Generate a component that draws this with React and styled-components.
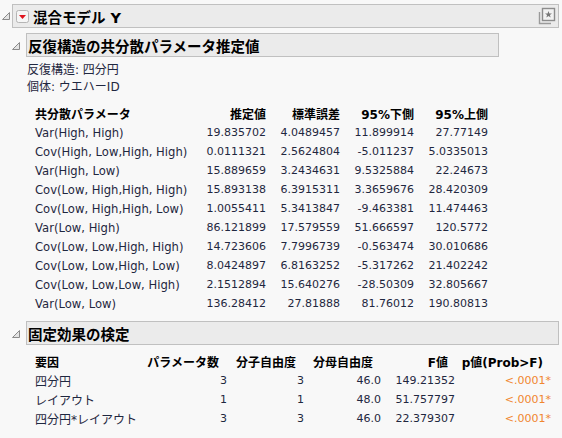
import styled, { createGlobalStyle } from 'styled-components'

const GlobalStyle = createGlobalStyle`
  body {
    margin: 0;
    background: #f8f8f8;
    font-family: "DejaVu Sans", "Noto Sans CJK JP", sans-serif;
    font-size: 11px;
    color: #1f2740;
  }
`

const Page = styled.div`
  padding: 4px 3px 0 2px;
`

const Outline = styled.div`
  display: grid;
  grid-template-columns: ${p => p.$indent}px 1fr;
  align-items: start;
`

const Toggle = styled.svg`
  width: 8px;
  height: 8px;
  margin-top: ${p => p.$top}px;
`

const Header = styled.div`
  display: flex;
  align-items: center;
  gap: 4px;
  height: 22px;
  width: ${p => (p.$width ? `${p.$width}px` : 'auto')};
  padding: 0 2px 0 ${p => p.$pad}px;
  background: #ebebeb;
  border: 1px solid #c0c0c0;
  font-size: 14.5px;
  font-weight: 700;
  color: #000;
`

const Title = styled.span`
  flex: 1;
  white-space: nowrap;
`

const Body = styled.div`
  padding-top: ${p => p.$top}px;
`

const Note = styled.div`
  font-size: 12px;
  line-height: 17px;
  padding-left: 1px;
`

const Table = styled.div`
  display: grid;
  grid-template-columns: ${p => p.$cols};
  grid-auto-rows: 19px;
  align-items: center;
  margin-left: 9px;
  white-space: nowrap;
`

const Cell = styled.div`
  text-align: ${p => (p.$left ? 'left' : 'right')};
  font-size: ${p => (p.$ja ? 12 : p.$left ? 11.6 : 11)}px;
  font-weight: ${p => (p.$head ? 700 : 400)};
  color: ${p => (p.$head ? '#000' : p.$alert ? '#f0862e' : 'inherit')};
  padding-right: ${p => p.$pr || 0}px;
`

const Gap = styled.div`
  height: ${p => p.$h}px;
`

const DisclosureIcon = ({ top }) => (
  <Toggle $top={top} viewBox="0 0 8 8">
    <polygon points="0.5,7.5 7.5,0.5 7.5,7.5" fill="#e4e4e4" stroke="#8a8a8a" strokeWidth="1" />
  </Toggle>
)

const MenuButton = () => (
  <svg width="13" height="13" viewBox="0 0 13 13">
    <rect x="0.5" y="0.5" width="12" height="12" rx="2" fill="#f6f6f6" stroke="#b5b5b5" />
    <polygon points="3,5 10,5 6.5,9" fill="#e0141e" />
  </svg>
)

const StarIcon = () => (
  <svg width="18" height="18" viewBox="0 0 18 18">
    <path d="M1.5 5 V16.5 H13" fill="none" stroke="#9a9a9a" strokeWidth="1.4" />
    <rect x="4.5" y="1.5" width="12" height="12" fill="#f2f2f2" stroke="#8c8c8c" strokeWidth="1.4" />
    <polygon points="10.5,4 11.4,6.6 14,6.6 11.9,8.1 12.7,10.6 10.5,9.1 8.3,10.6 9.1,8.1 7,6.6 9.6,6.6" fill="#777" />
  </svg>
)

const covRows = [
  ['Var(High, High)', '19.835702', '4.0489457', '11.899914', '27.77149'],
  ['Cov(High, Low,High, High)', '0.0111321', '2.5624804', '-5.011237', '5.0335013'],
  ['Var(High, Low)', '15.889659', '3.2434631', '9.5325884', '22.24673'],
  ['Cov(Low, High,High, High)', '15.893138', '6.3915311', '3.3659676', '28.420309'],
  ['Cov(Low, High,High, Low)', '1.0055411', '5.3413847', '-9.463381', '11.474463'],
  ['Var(Low, High)', '86.121899', '17.579559', '51.666597', '120.5772'],
  ['Cov(Low, Low,High, High)', '14.723606', '7.7996739', '-0.563474', '30.010686'],
  ['Cov(Low, Low,High, Low)', '8.0424897', '6.8163252', '-5.317262', '21.402242'],
  ['Cov(Low, Low,Low, High)', '2.1512894', '15.640276', '-28.50309', '32.805667'],
  ['Var(Low, Low)', '136.28412', '27.81888', '81.76012', '190.80813'],
]

const effectRows = [
  ['四分円', '3', '3', '46.0', '149.21352'],
  ['レイアウト', '1', '1', '48.0', '51.757797'],
  ['四分円*レイアウト', '3', '3', '46.0', '22.379307'],
]

function App () {
  return (
    <>
      <GlobalStyle />
      <Page>
        <Outline $indent={10}>
          <DisclosureIcon top={8} />
          <div>
            <Header $pad={3}>
              <MenuButton />
              <Title>混合モデル Y</Title>
              <StarIcon />
            </Header>

            <Gap $h={5} />
            <Outline $indent={14}>
              <DisclosureIcon top={9} />
              <div>
                <Header $pad={1} $width={468}>
                  <Title>反復構造の共分散パラメータ推定値</Title>
                </Header>
                <Body $top={5}>
                  <Note>反復構造: 四分円</Note>
                  <Note>個体: ウエハーID</Note>
                  <Gap $h={8} />
                  <Table $cols="166px 65px 74px 74px 74px">
                    <Cell $head $left $ja>共分散パラメータ</Cell>
                    <Cell $head $ja>推定値</Cell>
                    <Cell $head $ja>標準誤差</Cell>
                    <Cell $head $ja>95%下側</Cell>
                    <Cell $head $ja>95%上側</Cell>
                    {covRows.map(r => r.map((v, i) => (
                      <Cell key={r[0] + i} $left={i === 0}>{v}</Cell>
                    )))}
                  </Table>
                </Body>
              </div>
            </Outline>

            <Gap $h={8} />
            <Outline $indent={14}>
              <DisclosureIcon top={9} />
              <div>
                <Header $pad={1}>
                  <Title>固定効果の検定</Title>
                </Header>
                <Body $top={7}>
                  <Table $cols="105px 87px 77px 77px 74px 96px">
                    <Cell $head $left $ja>要因</Cell>
                    <Cell $head $ja $pr={8}>パラメータ数</Cell>
                    <Cell $head $ja $pr={8}>分子自由度</Cell>
                    <Cell $head $ja $pr={8}>分母自由度</Cell>
                    <Cell $head $ja $pr={7}>F値</Cell>
                    <Cell $head $ja $pr={8}>p値(Prob&gt;F)</Cell>
                    {effectRows.map(r => [
                      <Cell key={r[0] + 'a'} $left $ja>{r[0]}</Cell>,
                      <Cell key={r[0] + 'b'}>{r[1]}</Cell>,
                      <Cell key={r[0] + 'c'}>{r[2]}</Cell>,
                      <Cell key={r[0] + 'd'}>{r[3]}</Cell>,
                      <Cell key={r[0] + 'e'}>{r[4]}</Cell>,
                      <Cell key={r[0] + 'f'} $alert>&lt;.0001*</Cell>,
                    ])}
                  </Table>
                </Body>
              </div>
            </Outline>
          </div>
        </Outline>
      </Page>
    </>
  )
}

export default App
